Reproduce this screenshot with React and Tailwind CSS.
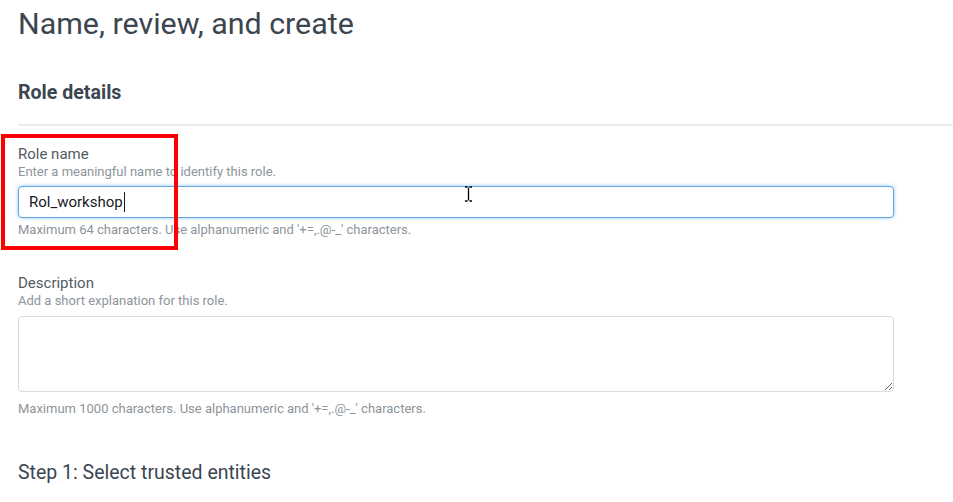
import React from 'react'

export default function App() {
  return (
    <div
      className="relative w-[953px] h-[502px] overflow-hidden bg-white pl-[18px]"
      style={{ fontFamily: 'Roboto, "Noto Sans", Arial, sans-serif' }}
    >
      <h1 className="pt-[6px] text-[30.4px] leading-[36px] font-normal text-[#3b4650]">
        Name, review, and create
      </h1>

      <h2 className="mt-[39px] text-[19.6px] leading-[24px] font-bold text-[#3b4650]">Role details</h2>

      <div className="mt-[19px] h-[2px] bg-[#ebebeb]" />

      <div className="w-[876px]">
        <div className="mt-[18px] text-[15px] leading-[20px] text-[#545b64]">Role name</div>
        <div className="text-[13px] leading-[16px] text-[#8d949b]">Enter a meaningful name to identify this role.</div>
        <div className="mt-[6px] h-[32px] flex items-center rounded-[4px] border border-[#5ea6e6] bg-white pl-[10px] text-[15px] text-[#16191f] shadow-[0_0_4px_rgba(0,120,210,0.4)]">
          <span>Rol_workshop</span>
          <span className="ml-[1px] inline-block w-[1px] h-[20px] bg-[#16191f]" />
        </div>
        <div className="mt-[4px] text-[13px] leading-[16px] text-[#8d949b]">
          Maximum 64 characters. Use alphanumeric and '+=,.@-_' characters.
        </div>

        <div className="mt-[35px] text-[15px] leading-[20px] text-[#545b64]">Description</div>
        <div className="text-[13px] leading-[16px] text-[#8d949b]">Add a short explanation for this role.</div>
        <textarea
          className="mt-[7px] block w-full h-[76px] rounded-[4px] border border-[#d9dcdf] bg-white"
          defaultValue=""
        />
        <div className="mt-[9px] text-[13px] leading-[16px] text-[#8d949b]">
          Maximum 1000 characters. Use alphanumeric and '+=,.@-_' characters.
        </div>

        <h3 className="mt-[44px] text-[19.5px] leading-[24px] font-normal text-[#3b4650]">
          Step 1: Select trusted entities
        </h3>
      </div>

      {/* red highlight box */}
      <div className="absolute left-[1px] top-[134px] w-[177px] h-[116px] border-[4px] border-[#ff0000]" />

      {/* mouse I-beam cursor */}
      <svg className="absolute left-[464px] top-[186px]" width="9" height="16" viewBox="0 0 9 16">
        <path d="M1 1h2.5M5.5 1H8M4.5 1.5v13M1 15h2.5M5.5 15H8" stroke="#000" strokeWidth="1.3" fill="none" />
      </svg>
    </div>
  )
}
